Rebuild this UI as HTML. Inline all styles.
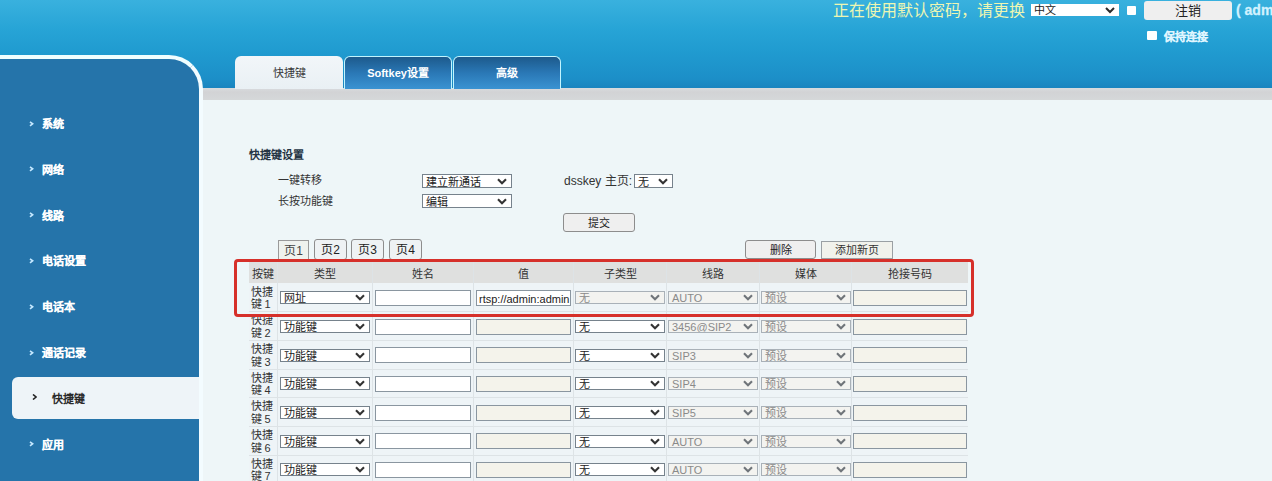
<!DOCTYPE html><html lang="zh-CN"><head><meta charset="utf-8"><style>
*{box-sizing:border-box}
html,body{margin:0;padding:0}
body{width:1272px;height:481px;overflow:hidden;position:relative;background:#eef6f8;font-family:"Liberation Sans", sans-serif;}
.abs{position:absolute}
.sel,.inp,.btn{position:absolute;border:1px solid #777;white-space:nowrap;overflow:hidden}
.sel{padding-left:3px}
.inp{padding-left:2px;color:#222}
.btn{text-align:center;border-color:#8d8d8d;border-radius:3px;color:#222}
.side{position:absolute;left:29px;color:#fff;font-weight:bold;font-size:11px;line-height:14px}
.side i{position:absolute;left:0;top:3.5px;width:5px;height:6px} .side svg{display:block}
.side span{position:absolute;left:13px;top:0;white-space:nowrap;-webkit-text-stroke:0.15px currentColor}
.hd{position:absolute;font-size:11px;color:#333;text-align:center;line-height:14px}
</style></head><body>
<div class="abs" style="left:0;top:0;width:1272px;height:89px;background:linear-gradient(#39b1de,#27a4d6 33%,#209bd0 58%,#1c8fc8 88%,#1983be)"></div>
<div class="abs" style="left:200px;top:88px;width:1072px;height:12px;background:linear-gradient(#d8dbde,#d2d3d5 35%,#d5d8d9)"></div>
<div class="abs" style="left:-4px;top:55px;width:207px;height:440px;background:#2574aa;border-top:4px solid #f0feff;border-right:4px solid #f3fcff;border-top-right-radius:34px"></div>
<div class="side" style="top:117.0px"><i><svg width="5" height="6"><polyline points="1,0.8 3.6,2.8 1,4.8" fill="none" stroke="#c4e8ff" stroke-width="1.7"/></svg></i><span>系统</span></div>
<div class="side" style="top:162.8px"><i><svg width="5" height="6"><polyline points="1,0.8 3.6,2.8 1,4.8" fill="none" stroke="#c4e8ff" stroke-width="1.7"/></svg></i><span>网络</span></div>
<div class="side" style="top:208.6px"><i><svg width="5" height="6"><polyline points="1,0.8 3.6,2.8 1,4.8" fill="none" stroke="#c4e8ff" stroke-width="1.7"/></svg></i><span>线路</span></div>
<div class="side" style="top:254.4px"><i><svg width="5" height="6"><polyline points="1,0.8 3.6,2.8 1,4.8" fill="none" stroke="#c4e8ff" stroke-width="1.7"/></svg></i><span>电话设置</span></div>
<div class="side" style="top:300.2px"><i><svg width="5" height="6"><polyline points="1,0.8 3.6,2.8 1,4.8" fill="none" stroke="#c4e8ff" stroke-width="1.7"/></svg></i><span>电话本</span></div>
<div class="side" style="top:346.0px"><i><svg width="5" height="6"><polyline points="1,0.8 3.6,2.8 1,4.8" fill="none" stroke="#c4e8ff" stroke-width="1.7"/></svg></i><span>通话记录</span></div>
<div class="abs" style="left:12px;top:377px;width:187px;height:42px;background:#eef4f8;border-radius:6px 0 0 6px"></div>
<div class="side" style="left:32px;top:391.8px;color:#2a2a2a"><i style="top:2px"><svg width="5" height="6"><polyline points="1,0.5 4,3 1,5.5" fill="none" stroke="#222" stroke-width="1.6"/></svg></i><span style="left:20px;-webkit-text-stroke:0">快捷键</span></div>
<div class="side" style="top:437.6px"><i><svg width="5" height="6"><polyline points="1,0.8 3.6,2.8 1,4.8" fill="none" stroke="#c4e8ff" stroke-width="1.7"/></svg></i><span>应用</span></div>
<div class="abs" style="left:235px;top:56px;width:108px;height:33px;background:linear-gradient(#f2f6f9,#e9f0f4);border-radius:6px 6px 0 0;font-size:11px;color:#3a3a3a;text-align:center;line-height:35px">快捷键</div>
<div class="abs" style="left:344px;top:56px;width:108px;height:33px;background:linear-gradient(#1d5a8c,#2a78b6 50%,#3a93d2);border:1px solid #c2f5ff;border-bottom:none;border-radius:6px 6px 0 0;font-size:11px;font-weight:bold;color:#fff;text-align:center;line-height:33px">Softkey设置</div>
<div class="abs" style="left:453px;top:56px;width:108px;height:33px;background:linear-gradient(#1d5a8c,#2a78b6 50%,#3a93d2);border:1px solid #c2f5ff;border-bottom:none;border-radius:6px 6px 0 0;font-size:11px;font-weight:bold;color:#fff;text-align:center;line-height:33px">高级</div>
<div class="abs" style="left:833px;top:1px;font-size:16px;color:#edf6b2;line-height:20px;white-space:nowrap">正在使用默认密码，请更换</div>
<div class="sel" style="left:1031px;top:4px;width:88px;height:12px;background:#fff;border:none;font-size:11px;line-height:12px;color:#222;padding-left:3px">中文<svg width="10" height="7" viewBox="0 0 10 7" style="position:absolute;right:4px;top:3px"><polyline points="1,1 5,5 9,1" fill="none" stroke="#2a2a2a" stroke-width="2"/></svg></div>
<div class="abs" style="left:1127px;top:6px;width:9px;height:9px;background:#fff;border-radius:1px"></div>
<div class="btn" style="left:1144px;top:1px;width:88px;height:19px;line-height:19px;font-size:13px;background:#efefef;border:none;border-radius:3px">注销</div>
<div class="abs" style="left:1236px;top:2px;font-size:14px;font-weight:bold;color:#d2f2ff;line-height:16px;-webkit-text-stroke:0.3px #d2f2ff;white-space:nowrap">( adm</div>
<div class="abs" style="left:1147px;top:31px;width:10px;height:9px;background:#fff;border-radius:1px"></div>
<div class="abs" style="left:1164px;top:30px;font-size:11px;font-weight:bold;color:#e0f6ff;line-height:14px;-webkit-text-stroke:0.15px #e0f6ff;white-space:nowrap">保持连接</div>
<div class="abs" style="left:249px;top:148px;font-size:11px;font-weight:bold;color:#253545;line-height:14px">快捷键设置</div>
<div class="abs" style="left:278px;top:173px;font-size:11px;color:#333;line-height:14px">一键转移</div>
<div class="abs" style="left:278px;top:194px;font-size:11px;color:#333;line-height:14px">长按功能键</div>
<div class="sel" style="left:422px;top:174px;width:90px;height:14px;background:#fff;border-color:#76828c;color:#222;font-size:11px;line-height:14px">建立新通话<svg width="10" height="7" viewBox="0 0 10 7" style="position:absolute;right:4px;top:50%;margin-top:-3.5px"><polyline points="1,1.2 5,5.2 9,1.2" fill="none" stroke="#333" stroke-width="2.1"/></svg></div>
<div class="sel" style="left:422px;top:194px;width:90px;height:14px;background:#fff;border-color:#76828c;color:#222;font-size:11px;line-height:14px">编辑<svg width="10" height="7" viewBox="0 0 10 7" style="position:absolute;right:4px;top:50%;margin-top:-3.5px"><polyline points="1,1.2 5,5.2 9,1.2" fill="none" stroke="#333" stroke-width="2.1"/></svg></div>
<div class="abs" style="left:564px;top:174px;font-size:12px;color:#333;line-height:14px;white-space:nowrap">dsskey 主页:</div>
<div class="sel" style="left:634px;top:174px;width:39px;height:14px;background:#fff;border-color:#76828c;color:#222;font-size:11px;line-height:14px">无<svg width="10" height="7" viewBox="0 0 10 7" style="position:absolute;right:4px;top:50%;margin-top:-3.5px"><polyline points="1,1.2 5,5.2 9,1.2" fill="none" stroke="#333" stroke-width="2.1"/></svg></div>
<div class="btn" style="left:563px;top:213px;width:72px;height:19px;line-height:19px;font-size:11px;background:#efefef">提交</div>
<div class="btn" style="left:278px;top:240px;width:31px;height:20px;line-height:20px;font-size:12px;background:#eff2ee;border-radius:0;border-color:#9a9a9a;color:#444">页1</div>
<div class="btn" style="left:314px;top:239px;width:33px;height:21px;line-height:21px;font-size:12px;background:#eef2f4">页2</div>
<div class="btn" style="left:351px;top:239px;width:33px;height:21px;line-height:21px;font-size:12px;background:#eef2f4">页3</div>
<div class="btn" style="left:389px;top:239px;width:33px;height:21px;line-height:21px;font-size:12px;background:#eef2f4">页4</div>
<div class="btn" style="left:745px;top:240px;width:71px;height:19px;line-height:19px;font-size:11px;background:#efefef">删除</div>
<div class="btn" style="left:821px;top:241px;width:72px;height:18px;line-height:17px;font-size:11px;background:#f1f2ec;border-radius:0;border-color:#9aa0a4;color:#333">添加新页</div>
<div class="abs" style="left:249px;top:262px;width:719px;height:21px;background:#dfe0df"></div>
<div class="hd" style="left:249.3px;top:266.5px;width:28.1px">按键</div>
<div class="hd" style="left:277.4px;top:266.5px;width:95.1px">类型</div>
<div class="hd" style="left:372.5px;top:266.5px;width:101.2px">姓名</div>
<div class="hd" style="left:473.7px;top:266.5px;width:99.8px">值</div>
<div class="hd" style="left:573.5px;top:266.5px;width:93.0px">子类型</div>
<div class="hd" style="left:666.5px;top:266.5px;width:93.2px">线路</div>
<div class="hd" style="left:759.7px;top:266.5px;width:91.9px">媒体</div>
<div class="hd" style="left:851.6px;top:266.5px;width:116.8px">抢接号码</div>
<div class="abs" style="left:249px;top:283px;width:719px;height:200px;background:#eef4f7"></div>
<div class="abs" style="left:276.9px;top:262px;width:1px;height:220px;background:#dde3e6"></div>
<div class="abs" style="left:372.0px;top:262px;width:1px;height:220px;background:#dde3e6"></div>
<div class="abs" style="left:473.2px;top:262px;width:1px;height:220px;background:#dde3e6"></div>
<div class="abs" style="left:573.0px;top:262px;width:1px;height:220px;background:#dde3e6"></div>
<div class="abs" style="left:666.0px;top:262px;width:1px;height:220px;background:#dde3e6"></div>
<div class="abs" style="left:759.2px;top:262px;width:1px;height:220px;background:#dde3e6"></div>
<div class="abs" style="left:851.1px;top:262px;width:1px;height:220px;background:#dde3e6"></div>
<div class="abs" style="left:249px;top:311px;width:719px;height:1px;background:#dde3e6"></div>
<div class="abs" style="left:249px;top:340px;width:719px;height:1px;background:#dde3e6"></div>
<div class="abs" style="left:249px;top:369px;width:719px;height:1px;background:#dde3e6"></div>
<div class="abs" style="left:249px;top:397px;width:719px;height:1px;background:#dde3e6"></div>
<div class="abs" style="left:249px;top:426px;width:719px;height:1px;background:#dde3e6"></div>
<div class="abs" style="left:249px;top:455px;width:719px;height:1px;background:#dde3e6"></div>
<div class="abs" style="left:250.5px;top:285.7px;font-size:11px;color:#333;line-height:12.5px">快捷<br>键 1</div>
<div class="sel" style="left:280px;top:291px;width:90px;height:13px;background:#fff;border-color:#76828c;color:#222;font-size:11px;line-height:13px">网址<svg width="10" height="7" viewBox="0 0 10 7" style="position:absolute;right:4px;top:50%;margin-top:-3.5px"><polyline points="1,1.2 5,5.2 9,1.2" fill="none" stroke="#333" stroke-width="2.1"/></svg></div>
<div class="inp" style="left:375px;top:290px;width:96px;height:16px;background:#fff;border-color:#8a96a0;font-size:11px;line-height:16px"></div>
<div class="inp" style="left:476px;top:290px;width:95px;height:16px;background:#fff;border-color:#8a96a0;font-size:11px;line-height:16px">rtsp://admin:admin</div>
<div class="sel" style="left:575px;top:291px;width:90px;height:13px;background:#f3f3f0;border-color:#a9b1b8;color:#8a8a8a;font-size:11px;line-height:13px">无<svg width="10" height="7" viewBox="0 0 10 7" style="position:absolute;right:4px;top:50%;margin-top:-3.5px"><polyline points="1,1.2 5,5.2 9,1.2" fill="none" stroke="#6f7479" stroke-width="2.1"/></svg></div>
<div class="sel" style="left:668px;top:291px;width:90px;height:13px;background:#f3f3f0;border-color:#a9b1b8;color:#8a8a8a;font-size:11px;line-height:13px">AUTO<svg width="10" height="7" viewBox="0 0 10 7" style="position:absolute;right:4px;top:50%;margin-top:-3.5px"><polyline points="1,1.2 5,5.2 9,1.2" fill="none" stroke="#6f7479" stroke-width="2.1"/></svg></div>
<div class="sel" style="left:761px;top:291px;width:90px;height:13px;background:#f3f3f0;border-color:#a9b1b8;color:#8a8a8a;font-size:11px;line-height:13px">预设<svg width="10" height="7" viewBox="0 0 10 7" style="position:absolute;right:4px;top:50%;margin-top:-3.5px"><polyline points="1,1.2 5,5.2 9,1.2" fill="none" stroke="#6f7479" stroke-width="2.1"/></svg></div>
<div class="inp" style="left:853px;top:290px;width:114px;height:16px;background:#f4f3eb;border-color:#8a96a0;font-size:11px;line-height:16px"></div>
<div class="abs" style="left:250.5px;top:314.4px;font-size:11px;color:#333;line-height:12.5px">快捷<br>键 2</div>
<div class="sel" style="left:280px;top:320px;width:90px;height:13px;background:#fff;border-color:#76828c;color:#222;font-size:11px;line-height:13px">功能键<svg width="10" height="7" viewBox="0 0 10 7" style="position:absolute;right:4px;top:50%;margin-top:-3.5px"><polyline points="1,1.2 5,5.2 9,1.2" fill="none" stroke="#333" stroke-width="2.1"/></svg></div>
<div class="inp" style="left:375px;top:319px;width:96px;height:16px;background:#fff;border-color:#8a96a0;font-size:11px;line-height:16px"></div>
<div class="inp" style="left:476px;top:319px;width:95px;height:16px;background:#f4f3eb;border-color:#8a96a0;font-size:11px;line-height:16px"></div>
<div class="sel" style="left:575px;top:320px;width:90px;height:13px;background:#fff;border-color:#76828c;color:#222;font-size:11px;line-height:13px">无<svg width="10" height="7" viewBox="0 0 10 7" style="position:absolute;right:4px;top:50%;margin-top:-3.5px"><polyline points="1,1.2 5,5.2 9,1.2" fill="none" stroke="#333" stroke-width="2.1"/></svg></div>
<div class="sel" style="left:668px;top:320px;width:90px;height:13px;background:#f3f3f0;border-color:#a9b1b8;color:#8a8a8a;font-size:11px;line-height:13px">3456@SIP2<svg width="10" height="7" viewBox="0 0 10 7" style="position:absolute;right:4px;top:50%;margin-top:-3.5px"><polyline points="1,1.2 5,5.2 9,1.2" fill="none" stroke="#6f7479" stroke-width="2.1"/></svg></div>
<div class="sel" style="left:761px;top:320px;width:90px;height:13px;background:#f3f3f0;border-color:#a9b1b8;color:#8a8a8a;font-size:11px;line-height:13px">预设<svg width="10" height="7" viewBox="0 0 10 7" style="position:absolute;right:4px;top:50%;margin-top:-3.5px"><polyline points="1,1.2 5,5.2 9,1.2" fill="none" stroke="#6f7479" stroke-width="2.1"/></svg></div>
<div class="inp" style="left:853px;top:319px;width:114px;height:16px;background:#f4f3eb;border-color:#8a96a0;font-size:11px;line-height:16px"></div>
<div class="abs" style="left:250.5px;top:343.0px;font-size:11px;color:#333;line-height:12.5px">快捷<br>键 3</div>
<div class="sel" style="left:280px;top:349px;width:90px;height:13px;background:#fff;border-color:#76828c;color:#222;font-size:11px;line-height:13px">功能键<svg width="10" height="7" viewBox="0 0 10 7" style="position:absolute;right:4px;top:50%;margin-top:-3.5px"><polyline points="1,1.2 5,5.2 9,1.2" fill="none" stroke="#333" stroke-width="2.1"/></svg></div>
<div class="inp" style="left:375px;top:347px;width:96px;height:16px;background:#fff;border-color:#8a96a0;font-size:11px;line-height:16px"></div>
<div class="inp" style="left:476px;top:347px;width:95px;height:16px;background:#f4f3eb;border-color:#8a96a0;font-size:11px;line-height:16px"></div>
<div class="sel" style="left:575px;top:349px;width:90px;height:13px;background:#fff;border-color:#76828c;color:#222;font-size:11px;line-height:13px">无<svg width="10" height="7" viewBox="0 0 10 7" style="position:absolute;right:4px;top:50%;margin-top:-3.5px"><polyline points="1,1.2 5,5.2 9,1.2" fill="none" stroke="#333" stroke-width="2.1"/></svg></div>
<div class="sel" style="left:668px;top:349px;width:90px;height:13px;background:#f3f3f0;border-color:#a9b1b8;color:#8a8a8a;font-size:11px;line-height:13px">SIP3<svg width="10" height="7" viewBox="0 0 10 7" style="position:absolute;right:4px;top:50%;margin-top:-3.5px"><polyline points="1,1.2 5,5.2 9,1.2" fill="none" stroke="#6f7479" stroke-width="2.1"/></svg></div>
<div class="sel" style="left:761px;top:349px;width:90px;height:13px;background:#f3f3f0;border-color:#a9b1b8;color:#8a8a8a;font-size:11px;line-height:13px">预设<svg width="10" height="7" viewBox="0 0 10 7" style="position:absolute;right:4px;top:50%;margin-top:-3.5px"><polyline points="1,1.2 5,5.2 9,1.2" fill="none" stroke="#6f7479" stroke-width="2.1"/></svg></div>
<div class="inp" style="left:853px;top:347px;width:114px;height:16px;background:#f4f3eb;border-color:#8a96a0;font-size:11px;line-height:16px"></div>
<div class="abs" style="left:250.5px;top:371.7px;font-size:11px;color:#333;line-height:12.5px">快捷<br>键 4</div>
<div class="sel" style="left:280px;top:377px;width:90px;height:13px;background:#fff;border-color:#76828c;color:#222;font-size:11px;line-height:13px">功能键<svg width="10" height="7" viewBox="0 0 10 7" style="position:absolute;right:4px;top:50%;margin-top:-3.5px"><polyline points="1,1.2 5,5.2 9,1.2" fill="none" stroke="#333" stroke-width="2.1"/></svg></div>
<div class="inp" style="left:375px;top:376px;width:96px;height:16px;background:#fff;border-color:#8a96a0;font-size:11px;line-height:16px"></div>
<div class="inp" style="left:476px;top:376px;width:95px;height:16px;background:#f4f3eb;border-color:#8a96a0;font-size:11px;line-height:16px"></div>
<div class="sel" style="left:575px;top:377px;width:90px;height:13px;background:#fff;border-color:#76828c;color:#222;font-size:11px;line-height:13px">无<svg width="10" height="7" viewBox="0 0 10 7" style="position:absolute;right:4px;top:50%;margin-top:-3.5px"><polyline points="1,1.2 5,5.2 9,1.2" fill="none" stroke="#333" stroke-width="2.1"/></svg></div>
<div class="sel" style="left:668px;top:377px;width:90px;height:13px;background:#f3f3f0;border-color:#a9b1b8;color:#8a8a8a;font-size:11px;line-height:13px">SIP4<svg width="10" height="7" viewBox="0 0 10 7" style="position:absolute;right:4px;top:50%;margin-top:-3.5px"><polyline points="1,1.2 5,5.2 9,1.2" fill="none" stroke="#6f7479" stroke-width="2.1"/></svg></div>
<div class="sel" style="left:761px;top:377px;width:90px;height:13px;background:#f3f3f0;border-color:#a9b1b8;color:#8a8a8a;font-size:11px;line-height:13px">预设<svg width="10" height="7" viewBox="0 0 10 7" style="position:absolute;right:4px;top:50%;margin-top:-3.5px"><polyline points="1,1.2 5,5.2 9,1.2" fill="none" stroke="#6f7479" stroke-width="2.1"/></svg></div>
<div class="inp" style="left:853px;top:376px;width:114px;height:16px;background:#f4f3eb;border-color:#8a96a0;font-size:11px;line-height:16px"></div>
<div class="abs" style="left:250.5px;top:400.4px;font-size:11px;color:#333;line-height:12.5px">快捷<br>键 5</div>
<div class="sel" style="left:280px;top:406px;width:90px;height:13px;background:#fff;border-color:#76828c;color:#222;font-size:11px;line-height:13px">功能键<svg width="10" height="7" viewBox="0 0 10 7" style="position:absolute;right:4px;top:50%;margin-top:-3.5px"><polyline points="1,1.2 5,5.2 9,1.2" fill="none" stroke="#333" stroke-width="2.1"/></svg></div>
<div class="inp" style="left:375px;top:405px;width:96px;height:16px;background:#fff;border-color:#8a96a0;font-size:11px;line-height:16px"></div>
<div class="inp" style="left:476px;top:405px;width:95px;height:16px;background:#f4f3eb;border-color:#8a96a0;font-size:11px;line-height:16px"></div>
<div class="sel" style="left:575px;top:406px;width:90px;height:13px;background:#fff;border-color:#76828c;color:#222;font-size:11px;line-height:13px">无<svg width="10" height="7" viewBox="0 0 10 7" style="position:absolute;right:4px;top:50%;margin-top:-3.5px"><polyline points="1,1.2 5,5.2 9,1.2" fill="none" stroke="#333" stroke-width="2.1"/></svg></div>
<div class="sel" style="left:668px;top:406px;width:90px;height:13px;background:#f3f3f0;border-color:#a9b1b8;color:#8a8a8a;font-size:11px;line-height:13px">SIP5<svg width="10" height="7" viewBox="0 0 10 7" style="position:absolute;right:4px;top:50%;margin-top:-3.5px"><polyline points="1,1.2 5,5.2 9,1.2" fill="none" stroke="#6f7479" stroke-width="2.1"/></svg></div>
<div class="sel" style="left:761px;top:406px;width:90px;height:13px;background:#f3f3f0;border-color:#a9b1b8;color:#8a8a8a;font-size:11px;line-height:13px">预设<svg width="10" height="7" viewBox="0 0 10 7" style="position:absolute;right:4px;top:50%;margin-top:-3.5px"><polyline points="1,1.2 5,5.2 9,1.2" fill="none" stroke="#6f7479" stroke-width="2.1"/></svg></div>
<div class="inp" style="left:853px;top:405px;width:114px;height:16px;background:#f4f3eb;border-color:#8a96a0;font-size:11px;line-height:16px"></div>
<div class="abs" style="left:250.5px;top:429.1px;font-size:11px;color:#333;line-height:12.5px">快捷<br>键 6</div>
<div class="sel" style="left:280px;top:435px;width:90px;height:13px;background:#fff;border-color:#76828c;color:#222;font-size:11px;line-height:13px">功能键<svg width="10" height="7" viewBox="0 0 10 7" style="position:absolute;right:4px;top:50%;margin-top:-3.5px"><polyline points="1,1.2 5,5.2 9,1.2" fill="none" stroke="#333" stroke-width="2.1"/></svg></div>
<div class="inp" style="left:375px;top:433px;width:96px;height:16px;background:#fff;border-color:#8a96a0;font-size:11px;line-height:16px"></div>
<div class="inp" style="left:476px;top:433px;width:95px;height:16px;background:#f4f3eb;border-color:#8a96a0;font-size:11px;line-height:16px"></div>
<div class="sel" style="left:575px;top:435px;width:90px;height:13px;background:#fff;border-color:#76828c;color:#222;font-size:11px;line-height:13px">无<svg width="10" height="7" viewBox="0 0 10 7" style="position:absolute;right:4px;top:50%;margin-top:-3.5px"><polyline points="1,1.2 5,5.2 9,1.2" fill="none" stroke="#333" stroke-width="2.1"/></svg></div>
<div class="sel" style="left:668px;top:435px;width:90px;height:13px;background:#f3f3f0;border-color:#a9b1b8;color:#8a8a8a;font-size:11px;line-height:13px">AUTO<svg width="10" height="7" viewBox="0 0 10 7" style="position:absolute;right:4px;top:50%;margin-top:-3.5px"><polyline points="1,1.2 5,5.2 9,1.2" fill="none" stroke="#6f7479" stroke-width="2.1"/></svg></div>
<div class="sel" style="left:761px;top:435px;width:90px;height:13px;background:#f3f3f0;border-color:#a9b1b8;color:#8a8a8a;font-size:11px;line-height:13px">预设<svg width="10" height="7" viewBox="0 0 10 7" style="position:absolute;right:4px;top:50%;margin-top:-3.5px"><polyline points="1,1.2 5,5.2 9,1.2" fill="none" stroke="#6f7479" stroke-width="2.1"/></svg></div>
<div class="inp" style="left:853px;top:433px;width:114px;height:16px;background:#f4f3eb;border-color:#8a96a0;font-size:11px;line-height:16px"></div>
<div class="abs" style="left:250.5px;top:457.7px;font-size:11px;color:#333;line-height:12.5px">快捷<br>键 7</div>
<div class="sel" style="left:280px;top:463px;width:90px;height:13px;background:#fff;border-color:#76828c;color:#222;font-size:11px;line-height:13px">功能键<svg width="10" height="7" viewBox="0 0 10 7" style="position:absolute;right:4px;top:50%;margin-top:-3.5px"><polyline points="1,1.2 5,5.2 9,1.2" fill="none" stroke="#333" stroke-width="2.1"/></svg></div>
<div class="inp" style="left:375px;top:462px;width:96px;height:16px;background:#fff;border-color:#8a96a0;font-size:11px;line-height:16px"></div>
<div class="inp" style="left:476px;top:462px;width:95px;height:16px;background:#f4f3eb;border-color:#8a96a0;font-size:11px;line-height:16px"></div>
<div class="sel" style="left:575px;top:463px;width:90px;height:13px;background:#fff;border-color:#76828c;color:#222;font-size:11px;line-height:13px">无<svg width="10" height="7" viewBox="0 0 10 7" style="position:absolute;right:4px;top:50%;margin-top:-3.5px"><polyline points="1,1.2 5,5.2 9,1.2" fill="none" stroke="#333" stroke-width="2.1"/></svg></div>
<div class="sel" style="left:668px;top:463px;width:90px;height:13px;background:#f3f3f0;border-color:#a9b1b8;color:#8a8a8a;font-size:11px;line-height:13px">AUTO<svg width="10" height="7" viewBox="0 0 10 7" style="position:absolute;right:4px;top:50%;margin-top:-3.5px"><polyline points="1,1.2 5,5.2 9,1.2" fill="none" stroke="#6f7479" stroke-width="2.1"/></svg></div>
<div class="sel" style="left:761px;top:463px;width:90px;height:13px;background:#f3f3f0;border-color:#a9b1b8;color:#8a8a8a;font-size:11px;line-height:13px">预设<svg width="10" height="7" viewBox="0 0 10 7" style="position:absolute;right:4px;top:50%;margin-top:-3.5px"><polyline points="1,1.2 5,5.2 9,1.2" fill="none" stroke="#6f7479" stroke-width="2.1"/></svg></div>
<div class="inp" style="left:853px;top:462px;width:114px;height:16px;background:#f4f3eb;border-color:#8a96a0;font-size:11px;line-height:16px"></div>
<div class="abs" style="left:234px;top:259px;width:740px;height:58px;border:3px solid #d6302a;border-radius:4px"></div>
</body></html>
